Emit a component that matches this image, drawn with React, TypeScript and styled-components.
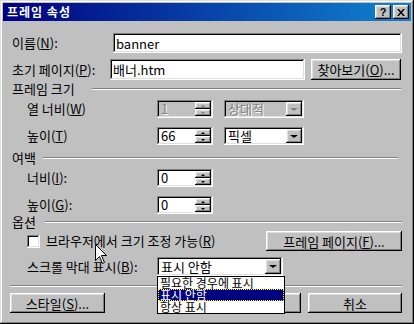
import React from "react";
import styled, { createGlobalStyle, css } from "styled-components";

const GlobalStyle = createGlobalStyle`
  html, body {
    margin: 0;
    padding: 0;
    background: #c0c0c0;
  }
  body {
    font-family: "Noto Sans CJK KR", "Noto Sans", sans-serif;
    font-size: 13px;
    color: #000;
  }
  u {
    text-underline-offset: 1px;
  }
`;

const raised = css`
  box-shadow: inset -1px -1px #000, inset 1px 1px #fff, inset -2px -2px #808080,
    inset 2px 2px #dfdfdf;
`;

const sunken = css`
  box-shadow: inset -1px -1px #fff, inset 1px 1px #808080, inset -2px -2px #dfdfdf,
    inset 2px 2px #000;
`;

const Window = styled.div`
  position: relative;
  width: 414px;
  height: 324px;
  box-sizing: border-box;
  padding: 3px;
  background: #c0c0c0;
  box-shadow: inset -1px -1px #000, inset 1px 1px #dfdfdf, inset -2px -2px #808080,
    inset 2px 2px #fff;
  display: flex;
  flex-direction: column;
  overflow: hidden;
`;

const TitleBar = styled.div`
  height: 18px;
  flex-shrink: 0;
  display: flex;
  align-items: center;
  padding: 0 2px 0 4px;
  background: linear-gradient(to right, #000080, #1084d0);
  color: #fff;
  font-weight: bold;
  font-size: 12px;
  line-height: 14px;
`;

const Title = styled.span`
  flex: 1;
  letter-spacing: 1px;
`;

const TitleButton = styled.div<{ $gap?: number }>`
  width: 16px;
  height: 14px;
  margin-left: ${(p) => p.$gap ?? 0}px;
  background: #c0c0c0;
  ${raised};
  display: flex;
  align-items: center;
  justify-content: center;
  color: #000;
  font-family: "Liberation Sans", Arial, sans-serif;
  font-weight: bold;
  font-size: 11px;
  line-height: 1;
`;

const Body = styled.div`
  display: flex;
  flex-direction: column;
  padding: 0 9px 0 7px;
`;

const Row = styled.div<{ $top: number; $h?: number }>`
  display: flex;
  align-items: center;
  margin-top: ${(p) => p.$top}px;
  height: ${(p) => p.$h ?? 20}px;
  flex-shrink: 0;
`;

const Label = styled.span<{ $w?: number; $indent?: number }>`
  width: ${(p) => (p.$w ? `${p.$w}px` : "auto")};
  padding-left: ${(p) => p.$indent ?? 0}px;
  box-sizing: border-box;
  flex-shrink: 0;
  white-space: nowrap;
  line-height: 16px;
`;

const TextBox = styled.div<{ $w: number }>`
  width: ${(p) => p.$w}px;
  height: 100%;
  box-sizing: border-box;
  padding: 0 3px;
  background: #fff;
  ${sunken};
  display: flex;
  align-items: center;
  line-height: 15px;
`;

const Spin = styled.div<{ $disabled?: boolean }>`
  width: 56px;
  height: 100%;
  box-sizing: border-box;
  padding: 2px;
  display: flex;
  background: ${(p) => (p.$disabled ? "#c0c0c0" : "#fff")};
  ${sunken};
`;

const FieldText = styled.span<{ $disabled?: boolean }>`
  flex: 1;
  display: flex;
  align-items: center;
  padding-left: 2px;
  line-height: 14px;
  color: ${(p) => (p.$disabled ? "#808080" : "#000")};
  text-shadow: ${(p) => (p.$disabled ? "1px 1px #fff" : "none")};
  white-space: nowrap;
`;

const SpinButtons = styled.div`
  width: 16px;
  display: flex;
  flex-direction: column;
`;

const SpinButton = styled.div`
  flex: 1;
  background: #c0c0c0;
  ${raised};
  display: flex;
  align-items: center;
  justify-content: center;
`;

const Arrow = styled.span<{ $dir: "up" | "down"; $size: number; $disabled?: boolean }>`
  width: 0;
  height: 0;
  border-left: ${(p) => p.$size}px solid transparent;
  border-right: ${(p) => p.$size}px solid transparent;
  ${(p) =>
    p.$dir === "up"
      ? css`border-bottom: ${Math.ceil(p.$size / 2) + 1}px solid ${p.$disabled ? "#808080" : "#000"};`
      : css`border-top: ${Math.ceil(p.$size / 2) + 1}px solid ${p.$disabled ? "#808080" : "#000"};`}
`;

const Combo = styled.div<{ $w: number; $disabled?: boolean }>`
  position: relative;
  width: ${(p) => p.$w}px;
  height: 100%;
  box-sizing: border-box;
  padding: 2px;
  display: flex;
  background: ${(p) => (p.$disabled ? "#c0c0c0" : "#fff")};
  ${sunken};
`;

const ComboButton = styled.div`
  width: 16px;
  background: #c0c0c0;
  ${raised};
  display: flex;
  align-items: center;
  justify-content: center;
`;

const DropList = styled.div`
  position: absolute;
  top: 100%;
  left: 0;
  width: 128px;
  box-sizing: border-box;
  border: 1px solid #000;
  background: #fff;
  z-index: 3;
  display: flex;
  flex-direction: column;
`;

const DropItem = styled.div<{ $selected?: boolean }>`
  height: 12px;
  line-height: 12px;
  font-size: 12px;
  padding-left: 2px;
  white-space: nowrap;
  overflow: hidden;
  background: ${(p) => (p.$selected ? "#000080" : "#fff")};
  color: ${(p) => (p.$selected ? "#fff" : "#000")};
  outline: ${(p) => (p.$selected ? "1px dotted #ffff00" : "none")};
  outline-offset: -1px;
`;

const Section = styled.div<{ $top: number }>`
  display: flex;
  align-items: center;
  height: 14px;
  margin-top: ${(p) => p.$top}px;
  flex-shrink: 0;
`;

const Etched = styled.div<{ $end?: number }>`
  flex: 1;
  height: 0;
  margin-right: ${(p) => p.$end ?? 0}px;
  border-top: 1px solid #808080;
  border-bottom: 1px solid #fff;
`;

const Separator = styled.div<{ $top: number }>`
  height: 0;
  margin-top: ${(p) => p.$top}px;
  border-top: 1px solid #808080;
  border-bottom: 1px solid #fff;
  flex-shrink: 0;
`;

const Button = styled.div<{ $w: number; $left?: string }>`
  width: ${(p) => p.$w}px;
  height: 100%;
  margin-left: ${(p) => p.$left ?? "0"};
  box-sizing: border-box;
  background: #c0c0c0;
  ${raised};
  display: flex;
  align-items: center;
  justify-content: center;
  white-space: nowrap;
  flex-shrink: 0;
  line-height: 15px;
`;

const CheckBox = styled.div`
  width: 13px;
  height: 13px;
  margin: 0 6px 0 17px;
  background: #fff;
  ${sunken};
  flex-shrink: 0;
`;

const Cursor = styled.svg`
  position: absolute;
  left: 95px;
  top: 244px;
  z-index: 5;
`;

const Spinner = ({ value, disabled }: { value: string; disabled?: boolean }) => (
  <Spin $disabled={disabled}>
    <FieldText $disabled={disabled}>{value}</FieldText>
    <SpinButtons>
      <SpinButton>
        <Arrow $dir="up" $size={2} $disabled={disabled} />
      </SpinButton>
      <SpinButton>
        <Arrow $dir="down" $size={2} $disabled={disabled} />
      </SpinButton>
    </SpinButtons>
  </Spin>
);

const Select = ({
  value,
  width,
  disabled,
  children,
}: {
  value: string;
  width: number;
  disabled?: boolean;
  children?: React.ReactNode;
}) => (
  <Combo $w={width} $disabled={disabled}>
    <FieldText $disabled={disabled}>{value}</FieldText>
    <ComboButton>
      <Arrow $dir="down" $size={4} $disabled={disabled} />
    </ComboButton>
    {children}
  </Combo>
);

export default function App() {
  return (
    <>
      <GlobalStyle />
      <Window>
        <TitleBar>
          <Title>프레임 속성</Title>
          <TitleButton>?</TitleButton>
          <TitleButton $gap={2}>
            <svg width="8" height="7" viewBox="0 0 8 7">
              <path d="M0 0h2l2 2.5L6 0h2L5 3.5 8 7H6L4 4.5 2 7H0l3-3.5z" fill="#000" />
            </svg>
          </TitleButton>
        </TitleBar>

        <Body>
          <Row $top={12}>
            <Label $w={103} $indent={2}>
              이름(<u>N</u>):
            </Label>
            <TextBox $w={294}>banner</TextBox>
          </Row>

          <Row $top={6} $h={21}>
            <Label $w={100} $indent={2}>
              초기 페이지(<u>P</u>):
            </Label>
            <TextBox $w={195}>배너.htm</TextBox>
            <Button $w={90} $left="6px">
              찾아보기(<u>O</u>)...
            </Button>
          </Row>

          <Section $top={2}>
            <Label $w={82} $indent={2}>
              프레임 크기
            </Label>
            <Etched $end={1} />
          </Section>

          <Row $top={4} $h={18}>
            <Label $w={147} $indent={17}>
              열 너비(<u>W</u>)
            </Label>
            <Spinner value="1" disabled />
            <Label $w={11} />
            <Select value="상대적" width={80} disabled />
          </Row>

          <Row $top={9} $h={18}>
            <Label $w={147} $indent={17}>
              높이(<u>T</u>)
            </Label>
            <Spinner value="66" />
            <Label $w={11} />
            <Select value="픽셀" width={80} />
          </Row>

          <Section $top={6}>
            <Label $w={33} $indent={2}>
              여백
            </Label>
            <Etched $end={4} />
          </Section>

          <Row $top={4} $h={18}>
            <Label $w={147} $indent={17}>
              너비(<u>I</u>):
            </Label>
            <Spinner value="0" />
          </Row>

          <Row $top={9} $h={18}>
            <Label $w={147} $indent={17}>
              높이(<u>G</u>):
            </Label>
            <Spinner value="0" />
          </Row>

          <Section $top={1}>
            <Label $w={35} $indent={2}>
              옵션
            </Label>
            <Etched />
          </Section>

          <Row $top={2}>
            <CheckBox />
            <Label>
              브라우저에서 크기 조정 가능(<u>R</u>)
            </Label>
            <Button $w={136} $left="auto">
              프레임 페이지(<u>F</u>)...
            </Button>
          </Row>

          <Row $top={6} $h={19}>
            <Label $w={147} $indent={17}>
              스크롤 막대 표시(<u>B</u>):
            </Label>
            <Select value="표시 안함" width={126}>
              <DropList>
                <DropItem>필요한 경우에 표시</DropItem>
                <DropItem $selected>표시 안함</DropItem>
                <DropItem>항상 표시</DropItem>
              </DropList>
            </Select>
          </Row>

          <Separator $top={9} />

          <Row $top={6}>
            <Button $w={95}>
              스타일(<u>S</u>)...
            </Button>
            <Button $w={94} $left="auto">
              확인
            </Button>
            <Button $w={94} $left="7px">
              취소
            </Button>
          </Row>
        </Body>

        <Cursor width="13" height="21" viewBox="0 0 13 21">
          <path
            d="M0.5 0.5V16.5L4.5 12.5L7.5 19.5L9.5 18.5L6.5 11.5H11.5Z"
            fill="#fff"
            stroke="#000"
            strokeWidth="1"
          />
        </Cursor>
      </Window>
    </>
  );
}
